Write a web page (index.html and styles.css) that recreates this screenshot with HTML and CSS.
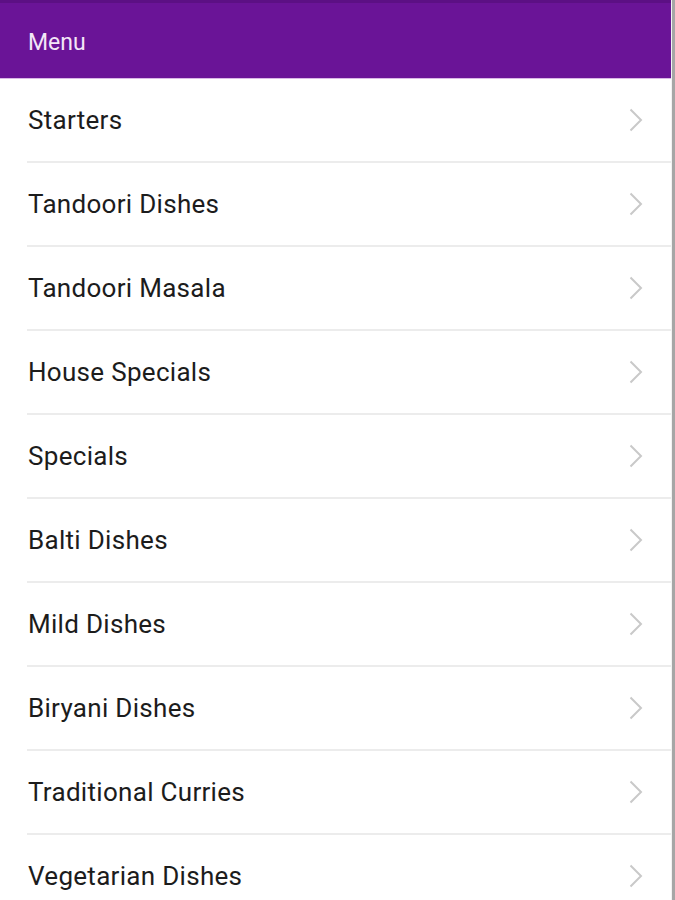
FILE: index.html
```
<!DOCTYPE html>
<html>
<head>
<meta charset="utf-8">
<link rel="stylesheet" href="styles.css">
</head>
<body>
<div class="frame">
  <div class="screen">
    <header class="appbar"><span class="title">Menu</span></header>
    <ul class="list">
      <li class="row"><span class="label">Starters</span><svg class="chev" viewBox="0 0 14 24"><path d="M1.5 1.5 L12 12 L1.5 22.5"/></svg></li>
      <li class="row"><span class="label">Tandoori Dishes</span><svg class="chev" viewBox="0 0 14 24"><path d="M1.5 1.5 L12 12 L1.5 22.5"/></svg></li>
      <li class="row"><span class="label">Tandoori Masala</span><svg class="chev" viewBox="0 0 14 24"><path d="M1.5 1.5 L12 12 L1.5 22.5"/></svg></li>
      <li class="row"><span class="label">House Specials</span><svg class="chev" viewBox="0 0 14 24"><path d="M1.5 1.5 L12 12 L1.5 22.5"/></svg></li>
      <li class="row"><span class="label">Specials</span><svg class="chev" viewBox="0 0 14 24"><path d="M1.5 1.5 L12 12 L1.5 22.5"/></svg></li>
      <li class="row"><span class="label">Balti Dishes</span><svg class="chev" viewBox="0 0 14 24"><path d="M1.5 1.5 L12 12 L1.5 22.5"/></svg></li>
      <li class="row"><span class="label">Mild Dishes</span><svg class="chev" viewBox="0 0 14 24"><path d="M1.5 1.5 L12 12 L1.5 22.5"/></svg></li>
      <li class="row"><span class="label">Biryani Dishes</span><svg class="chev" viewBox="0 0 14 24"><path d="M1.5 1.5 L12 12 L1.5 22.5"/></svg></li>
      <li class="row"><span class="label">Traditional Curries</span><svg class="chev" viewBox="0 0 14 24"><path d="M1.5 1.5 L12 12 L1.5 22.5"/></svg></li>
      <li class="row"><span class="label">Vegetarian Dishes</span><svg class="chev" viewBox="0 0 14 24"><path d="M1.5 1.5 L12 12 L1.5 22.5"/></svg></li>
    </ul>
  </div>
  <div class="edge"></div>
</div>
</body>
</html>
```
FILE: styles.css
```
html, body {
  margin: 0;
  padding: 0;
  background: #ffffff;
  overflow: hidden;
}
body {
  font-family: Roboto, "Noto Sans", sans-serif;
  width: 675px;
  height: 900px;
}
.frame {
  display: flex;
  height: 900px;
}
.screen {
  width: 671px;
  height: 900px;
  overflow: hidden;
  background: #ffffff;
}
.edge {
  width: 4px;
  height: 900px;
  box-sizing: border-box;
  border-left: 1px solid #f2f2f2;
  background: #a6a6a6;
}
.appbar {
  height: 79px;
  box-sizing: border-box;
  background: #6a1497;
  border-top: 3px solid #5c1084;
  border-bottom: 1px solid #d9b8e6;
  display: flex;
  align-items: center;
  padding-left: 28px;
  padding-top: 3px;
}
.title {
  color: #f3e6f7;
  font-size: 23px;
  font-weight: 400;
}
.list {
  list-style: none;
  margin: 0;
  padding: 0;
}
.row {
  height: 84px;
  box-sizing: border-box;
  margin-left: 27px;
  border-bottom: 2px solid #ececec;
  display: flex;
  align-items: center;
  justify-content: space-between;
  padding-right: 28px;
}
.label {
  color: #1c1c1c;
  font-size: 26px;
  letter-spacing: 0.3px;
  padding-left: 1px;
}
.chev {
  width: 14px;
  height: 24px;
  fill: none;
  stroke: #c9c9c9;
  stroke-width: 2;
}
```
